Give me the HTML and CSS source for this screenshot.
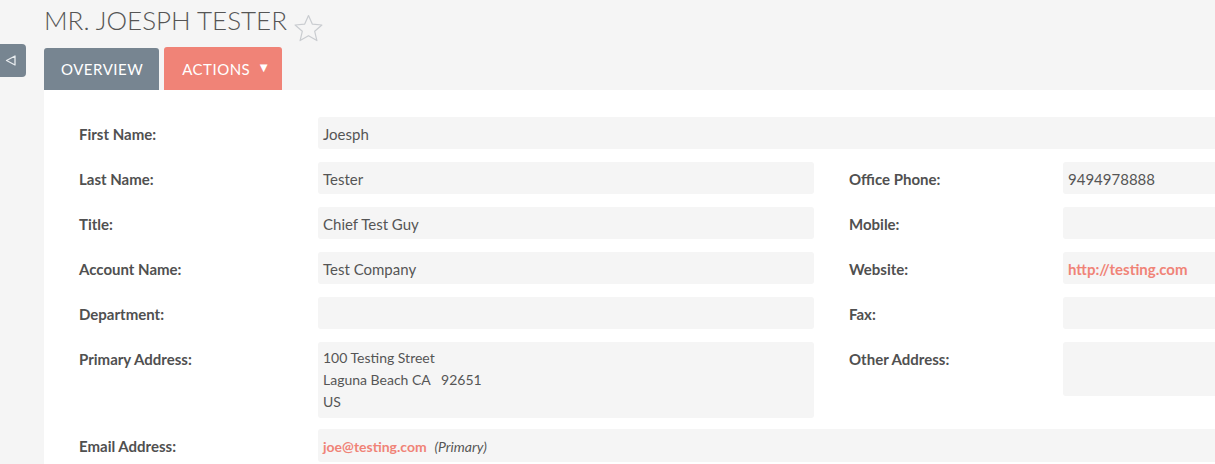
FILE: index.html
```html
<!DOCTYPE html>
<html>
<head>
<meta charset="utf-8">
<link rel="stylesheet" href="styles.css">
</head>
<body>
<div class="page">
  <div class="side">
    <div class="side-toggle">
      <svg width="11" height="11" viewBox="0 0 11 11"><path d="M10 1 L1.5 5.5 L10 10 Z" fill="none" stroke="#e8ecef" stroke-width="1.3" stroke-linejoin="round"/></svg>
    </div>
  </div>
  <div class="main">
    <div class="title-row">
      <h1 class="title">MR. JOESPH TESTER</h1>
      <svg class="star" width="31" height="29" viewBox="0 0 31 29"><path d="M15.5 1.5 L19.4 10.2 L28.9 11 L21.7 17.3 L23.9 26.6 L15.5 21.7 L7.1 26.6 L9.3 17.3 L2.1 11 L11.6 10.2 Z" fill="none" stroke="#c9ccd0" stroke-width="1.2" stroke-linejoin="round"/></svg>
    </div>
    <div class="tabs">
      <div class="tab tab-overview">OVERVIEW</div>
      <div class="tab tab-actions">ACTIONS <span class="caret">&#9660;</span></div>
    </div>
    <div class="panel">
      <div class="row">
        <div class="label">First Name:</div>
        <div class="value wide">Joesph</div>
      </div>
      <div class="row">
        <div class="label">Last Name:</div>
        <div class="value">Tester</div>
        <div class="label label-right">Office Phone:</div>
        <div class="value value-right">9494978888</div>
      </div>
      <div class="row">
        <div class="label">Title:</div>
        <div class="value">Chief Test Guy</div>
        <div class="label label-right">Mobile:</div>
        <div class="value value-right"></div>
      </div>
      <div class="row">
        <div class="label">Account Name:</div>
        <div class="value">Test Company</div>
        <div class="label label-right">Website:</div>
        <div class="value value-right"><span class="link">http://testing.com</span></div>
      </div>
      <div class="row">
        <div class="label">Department:</div>
        <div class="value"></div>
        <div class="label label-right">Fax:</div>
        <div class="value value-right"></div>
      </div>
      <div class="row row-address">
        <div class="label">Primary Address:</div>
        <div class="value address">100 Testing Street<br>Laguna Beach CA&nbsp;&nbsp; 92651<br>US</div>
        <div class="label label-right">Other Address:</div>
        <div class="value value-right other-address"></div>
      </div>
      <div class="row">
        <div class="label">Email Address:</div>
        <div class="value wide"><span class="link link-email">joe@testing.com</span>&nbsp; <em class="primary">(Primary)</em></div>
      </div>
    </div>
  </div>
</div>
</body>
</html>
```

FILE: styles.css
```css
html, body {
  margin: 0;
  padding: 0;
}

body {
  background: #f5f5f5;
  font-family: Lato, "Open Sans", sans-serif;
  color: #555555;
  overflow: hidden;
}

.page {
  display: flex;
  align-items: flex-start;
  width: 1215px;
}

.side {
  width: 44px;
  flex: none;
  padding-top: 44px;
}

.side-toggle {
  width: 26px;
  height: 33px;
  background: #778591;
  border-radius: 0 4px 4px 0;
  display: flex;
  align-items: center;
  justify-content: center;
  box-sizing: border-box;
  padding-right: 6px;
}

.main {
  flex: 1;
  min-width: 0;
}

.title-row {
  display: flex;
  align-items: flex-start;
  height: 47px;
}

.title {
  margin: 0;
  padding-top: 5px;
  font-size: 26px;
  font-weight: 300;
  line-height: 31px;
  color: #555555;
}

.star {
  margin-left: 6px;
  margin-top: 14px;
}

.tabs {
  display: flex;
  align-items: flex-end;
  gap: 5px;
  height: 43px;
}

.tab {
  color: #ffffff;
  font-size: 15px;
  letter-spacing: 0.5px;
  border-radius: 3px 3px 0 0;
  display: flex;
  align-items: center;
  box-sizing: border-box;
}

.tab-overview {
  background: #778591;
  height: 42px;
  padding: 0 16px 0 17px;
}

.tab-actions {
  background: #f08377;
  height: 43px;
  padding: 0 11px 0 18px;
}

.caret {
  font-size: 13px;
  margin-left: 7px;
  margin-top: -4px;
}

.panel {
  background: #ffffff;
  padding: 27px 0 20px 35px;
  min-height: 400px;
}

.row {
  display: grid;
  grid-template-columns: 239px 496px 249px 1fr;
  margin-bottom: 13px;
  align-items: start;
}

.row-address {
  margin-bottom: 11px;
}

.label {
  font-size: 15px;
  font-weight: 700;
  color: #505050;
  line-height: 22px;
  padding-top: 6px;
}

.label-right {
  padding-left: 35px;
}

.value {
  background: #f5f5f5;
  border-radius: 3px;
  font-size: 15px;
  line-height: 22px;
  padding: 6px 5px 4px;
  min-height: 22px;
  color: #555555;
}

.value.wide {
  grid-column: 2 / 5;
  border-radius: 3px 0 0 3px;
}

.value-right {
  border-radius: 3px 0 0 3px;
}

.address {
  font-size: 14px;
  padding-top: 5px;
  padding-bottom: 5px;
  min-height: 66px;
}

.other-address {
  min-height: 44px;
}

.link {
  color: #f08377;
  font-weight: 700;
}

.link-email {
  font-size: 14px;
}

.primary {
  font-size: 14px;
}
```
